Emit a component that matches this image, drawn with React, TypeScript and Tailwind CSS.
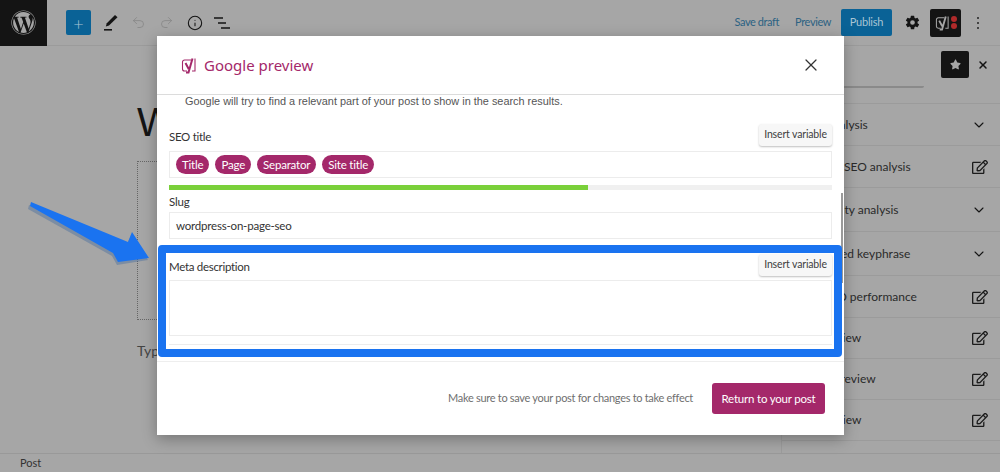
import { ChevronDown, Info, Redo2, Undo2, X } from 'lucide-react'
import { FaRegEdit, FaStar, FaWordpress } from 'react-icons/fa'
import { FaXmark } from 'react-icons/fa6'
import { IoSettingsSharp } from 'react-icons/io5'

const rows = [
  { label: 'SEO analysis', icon: 'chevron', h: 'h-[42px] pl-[19px]' },
  { label: 'Premium SEO analysis', icon: 'edit', h: 'h-[42px] pl-[12px]' },
  { label: 'Readability analysis', icon: 'chevron', h: 'h-[44px] pl-[15px]' },
  { label: 'Add related keyphrase', icon: 'chevron', h: 'h-[44px] pl-[11px]' },
  { label: 'Track SEO performance', icon: 'edit', h: 'h-[42px] pl-[11px]' },
  { label: 'Post preview', icon: 'edit', h: 'h-[41px] pl-[11px]' },
  { label: 'Google preview', icon: 'edit', h: 'h-[41px] pl-[11px]' },
  { label: 'Page preview', icon: 'edit', h: 'h-[41px] pl-[9px]' },
]

const chips = ['Title', 'Page', 'Separator', 'Site title']

function YoastMark({ color, className }: { color: string; className: string }) {
  return (
    <svg viewBox="0 0 16 17" fill="none" stroke={color} className={className}>
      <path d="M10 3H3.5A2 2 0 0 0 1.5 5v7a2 2 0 0 0 2 2H6" strokeWidth="1.1" />
      <path d="M14 1.5V14h-3" strokeWidth="1.1" />
      <path d="M4.5 6l3.2 6M11.5 1.5L7.5 15.5H5" strokeWidth="2" />
    </svg>
  )
}

function InsertVariable() {
  return (
    <button className="h-[22px] w-[73px] rounded-[3px] bg-[#f7f7f7] text-[10.5px] tracking-[-0.15px] text-[#404040] shadow-[0_1px_2px_rgba(0,0,0,0.25)]">
      Insert variable
    </button>
  )
}

export default function App() {
  return (
    <div className="relative flex h-[472px] w-[1000px] flex-col overflow-hidden bg-[#a6a6a6] font-['Lato',sans-serif] text-[#222]">
      {/* editor toolbar */}
      <header className="flex h-[46px] shrink-0 items-center border-b border-[#9b9b9b]">
        <div className="flex h-[46px] w-[47px] items-center justify-center bg-[#141414]">
          <FaWordpress className="h-[25px] w-[25px] text-[#a6a6a6]" />
        </div>
        <div className="ml-[19px] flex h-[25px] w-[25px] items-center justify-center rounded-[2px] bg-[#0a6296] text-[18px] font-light leading-none text-[#a9c4d4]">
          +
        </div>
        <svg viewBox="0 0 16 18" className="ml-[12px] h-[18px] w-[16px]" fill="#141414">
          <path d="M12 1l2.5 2.2L6 11.5l-3.2 1 1-3.2z" />
          <rect x="1" y="15" width="8" height="1.6" />
        </svg>
        <Undo2 className="ml-[12px] h-[15px] w-[15px] text-[#868686]" strokeWidth={1.3} />
        <Redo2 className="ml-[13px] h-[15px] w-[15px] text-[#868686]" strokeWidth={1.3} />
        <Info className="ml-[13px] h-[16px] w-[16px] text-[#141414]" strokeWidth={1.6} />
        <svg viewBox="0 0 16 14" className="ml-[11px] h-[14px] w-[16px]" stroke="#141414" strokeWidth="1.5">
          <path d="M0 2h9M4 7h8M7 12h9" />
        </svg>
        <div className="ml-auto flex items-center">
          <span className="text-[11px] tracking-[-0.4px] text-[#2c6283]">Save draft</span>
          <span className="ml-[16px] text-[11px] tracking-[-0.4px] text-[#2c6283]">Preview</span>
          <div className="ml-[10px] flex h-[27px] w-[51px] items-center justify-center rounded-[2px] bg-[#0a6296] text-[11px] tracking-[-0.2px] text-[#a9c4d4]">
            Publish
          </div>
          <IoSettingsSharp className="ml-[13px] h-[15px] w-[15px] text-[#141414]" />
          <div className="ml-[10px] flex h-[28px] w-[31px] items-center justify-center gap-[1px] rounded-[2px] bg-[#141414]">
            <YoastMark color="#a6a6a6" className="h-[16px] w-[15px]" />
            <div className="flex flex-col gap-[1px]">
              <span className="h-[6px] w-[6px] rounded-full bg-[#b02a2a]" />
              <span className="h-[6px] w-[6px] rounded-full bg-[#b02a2a]" />
            </div>
          </div>
          <div className="ml-[16px] mr-[21px] flex flex-col gap-[3px]">
            <span className="h-[2px] w-[2px] rounded-full bg-[#222]" />
            <span className="h-[2px] w-[2px] rounded-full bg-[#222]" />
            <span className="h-[2px] w-[2px] rounded-full bg-[#222]" />
          </div>
        </div>
      </header>

      <div className="flex min-h-0 flex-1">
        {/* post canvas behind the dialog */}
        <main className="flex-1 pl-[137px] pt-[49px]">
          <h1 className="font-['Liberation_Sans',sans-serif] text-[40px] leading-[54px] text-[#141414]">Wordpress</h1>
          <div className="mt-[12px] h-[159px] w-[300px] border border-dotted border-[#666]" />
          <p className="mt-[20px] text-[14px] text-[#444]">Type / to choose a block</p>
        </main>

        {/* settings sidebar */}
        <aside className="w-[219px] border-l border-[#9c9c9c]">
          <div className="flex h-[40px] items-center justify-end pb-[3px] pr-[11px]">
            <div className="flex h-[27px] w-[28px] items-center justify-center rounded-[2px] bg-[#141414]">
              <FaStar className="h-[11px] w-[11px] text-[#a6a6a6]" />
            </div>
            <FaXmark className="ml-[8px] h-[12px] w-[12px] text-[#141414]" />
          </div>
          <div className="h-[2px] w-[142px] rounded-b-[2px] bg-[#8a8a8a]" />
          <div className="h-[16px] border-b border-[#9b9b9b]" />
          {rows.map((row) => (
            <div
              key={row.label}
              className={`flex items-center justify-between border-b border-[#9b9b9b] pr-[12px] text-[12px] text-[#2a2a2a] ${row.h}`}
            >
              {row.label}
              {row.icon === 'chevron' ? (
                <ChevronDown className="mr-[1px] h-[16px] w-[16px] text-[#141414]" strokeWidth={1.6} />
              ) : (
                <FaRegEdit className="h-[16px] w-[16px] text-[#1c1c1c]" />
              )}
            </div>
          ))}
        </aside>
      </div>

      <footer className="flex h-[19px] shrink-0 items-center border-t border-[#999] pl-[20px] text-[11px] text-[#333]">
        Post
      </footer>

      {/* Google preview dialog */}
      <section className="absolute left-[157px] top-[36px] flex h-[399px] w-[687px] flex-col bg-white shadow-[0_4px_14px_rgba(0,0,0,0.3)]">
        <div className="flex h-[59px] shrink-0 items-center border-b border-[#dcdcdc] pl-[24px] pr-[23px]">
          <YoastMark color="#a4286a" className="h-[17px] w-[16px]" />
          <h2 className="ml-[7px] font-['Noto_Sans',sans-serif] text-[15px] text-[#a4286a]">Google preview</h2>
          <X className="ml-auto h-[20px] w-[20px] text-[#333]" strokeWidth={1.5} />
        </div>

        <div className="flex-1 px-[12px]">
          <p className="pl-[16px] font-['Liberation_Sans',sans-serif] text-[10.9px] leading-[13px] text-[#555]">
            Google will try to find a relevant part of your post to show in the search results.
          </p>
          <div className="mt-[16px] flex items-center justify-between">
            <label className="mt-[4px] text-[11.5px] tracking-[-0.3px] text-[#333]">SEO title</label>
            <InsertVariable />
          </div>
          <div className="mt-[5px] flex h-[27px] items-center gap-[6px] border border-[#ececec] pl-[6px]">
            {chips.map((chip) => (
              <span key={chip} className="rounded-full bg-[#a4286a] px-[6px] py-[1px] text-[11.5px] leading-[17px] tracking-[-0.2px] text-white">
                {chip}
              </span>
            ))}
          </div>
          <div className="mt-[7px] h-[5px] w-full bg-[#f0f0f0]">
            <div className="h-full w-[419px] bg-[#7ad03a]" />
          </div>
          <label className="mt-[4px] block text-[11.5px] leading-[16px] tracking-[-0.2px] text-[#333]">Slug</label>
          <div className="mt-[2px] flex h-[27px] items-center border border-[#ececec] pl-[6px] text-[11.5px] tracking-[-0.2px] text-[#333]">
            wordpress-on-page-seo
          </div>
          <div className="mt-[15px] flex items-center justify-between">
            <label className="mt-[4px] text-[11.5px] tracking-[-0.3px] text-[#333]">Meta description</label>
            <InsertVariable />
          </div>
          <div className="mt-[4px] h-[56px] border border-[#ececec]" />
          <div className="mt-[8px] h-[1px] bg-[#ececec]" />
        </div>

        <div className="flex h-[74px] shrink-0 items-center justify-end border-t border-[#eeeeee] pl-[12px] pr-[19px]">
          <span className="text-[11px] tracking-[-0.3px] text-[#6f6f6f]">Make sure to save your post for changes to take effect</span>
          <button className="ml-[19px] h-[31px] w-[113px] rounded-[3px] bg-[#a4286a] text-[11.5px] tracking-[-0.2px] text-white">
            Return to your post
          </button>
        </div>

        {/* scrollbar and annotation sit on top of the dialog */}
        <div className="absolute left-[684px] top-[157px] h-[90px] w-[2px] bg-[#9a9a9a]" />
        <div className="pointer-events-none absolute left-[1px] top-[209px] h-[112px] w-[684px] rounded-[4px] border-[8px] border-[#1a73f0]" />
      </section>

      <svg viewBox="0 0 1000 472" className="pointer-events-none absolute left-0 top-0 h-[472px] w-[1000px]">
        <polygon points="30,203 128,242 132,233 149,258 118,263 113,254 29,207" fill="#2f5f9e" opacity="0.35" transform="translate(-1 2)" />
        <polygon points="31,202 128,242 132,232 149,258 118,262 113,253 30,206" fill="#1a73f0" />
      </svg>
    </div>
  )
}
